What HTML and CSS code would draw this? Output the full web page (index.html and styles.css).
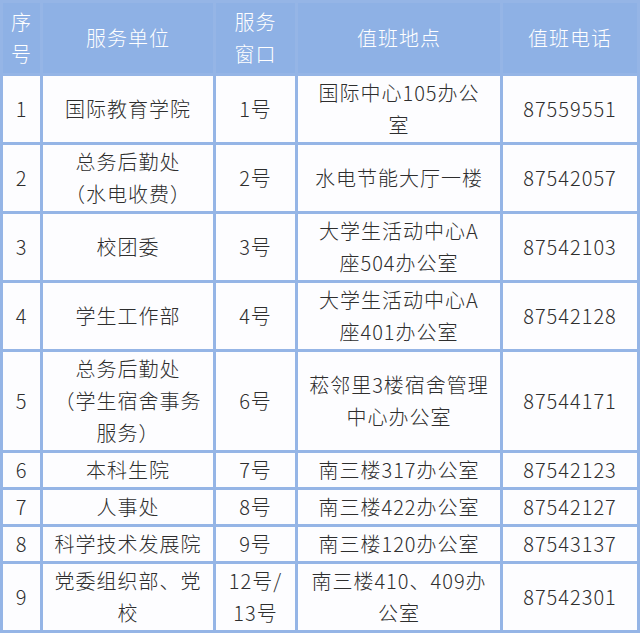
FILE: index.html
```html
<!DOCTYPE html>
<html lang="zh-CN">
<head>
<meta charset="utf-8">
<title>值班安排</title>
<link rel="stylesheet" href="styles.css">
</head>
<body>
<table class="duty">
  <colgroup>
    <col class="c-no">
    <col class="c-unit">
    <col class="c-win">
    <col class="c-loc">
    <col class="c-tel">
  </colgroup>
  <thead>
    <tr>
      <th>序<br>号</th>
      <th>服务单位</th>
      <th>服务<br>窗口</th>
      <th>值班地点</th>
      <th>值班电话</th>
    </tr>
  </thead>
  <tbody>
    <tr>
      <td>1</td>
      <td>国际教育学院</td>
      <td>1号</td>
      <td>国际中心105办公<br>室</td>
      <td>87559551</td>
    </tr>
    <tr>
      <td>2</td>
      <td>总务后勤处<br>（水电收费）</td>
      <td>2号</td>
      <td>水电节能大厅一楼</td>
      <td>87542057</td>
    </tr>
    <tr>
      <td>3</td>
      <td>校团委</td>
      <td>3号</td>
      <td>大学生活动中心A<br>座504办公室</td>
      <td>87542103</td>
    </tr>
    <tr>
      <td>4</td>
      <td>学生工作部</td>
      <td>4号</td>
      <td>大学生活动中心A<br>座401办公室</td>
      <td>87542128</td>
    </tr>
    <tr>
      <td>5</td>
      <td>总务后勤处<br>（学生宿舍事务<br>服务）</td>
      <td>6号</td>
      <td>菘邻里3楼宿舍管理<br>中心办公室</td>
      <td>87544171</td>
    </tr>
    <tr>
      <td>6</td>
      <td>本科生院</td>
      <td>7号</td>
      <td>南三楼317办公室</td>
      <td>87542123</td>
    </tr>
    <tr>
      <td>7</td>
      <td>人事处</td>
      <td>8号</td>
      <td>南三楼422办公室</td>
      <td>87542127</td>
    </tr>
    <tr>
      <td>8</td>
      <td>科学技术发展院</td>
      <td>9号</td>
      <td>南三楼120办公室</td>
      <td>87543137</td>
    </tr>
    <tr>
      <td>9</td>
      <td>党委组织部、党<br>校</td>
      <td>12号/<br>13号</td>
      <td>南三楼410、409办<br>公室</td>
      <td>87542301</td>
    </tr>
  </tbody>
</table>
</body>
</html>
```

FILE: styles.css
```css
html, body {
  margin: 0;
  padding: 0;
  background: #ffffff;
}

.duty {
  width: 640px;
  table-layout: fixed;
  border-collapse: separate;
  border-spacing: 3px;
  background: #95b5e6;
  font-family: "Noto Sans CJK SC", "Noto Sans", sans-serif;
  font-size: 20px;
  font-weight: 300;
  letter-spacing: 1px;
  line-height: 32px;
  color: #2e2e2e;
}

.c-no { width: 37px; }
.c-unit { width: 170px; }
.c-win { width: 79px; }
.c-loc { width: 202px; }
.c-tel { width: 134px; }

.duty th,
.duty td {
  padding: 1px 0;
  text-align: center;
  vertical-align: middle;
  white-space: nowrap;
}

.duty th {
  padding: 3px 0;
  background: #8eb1e5;
  color: #ffffff;
  font-weight: 300;
}

.duty td {
  background: #fdfdff;
}
```
